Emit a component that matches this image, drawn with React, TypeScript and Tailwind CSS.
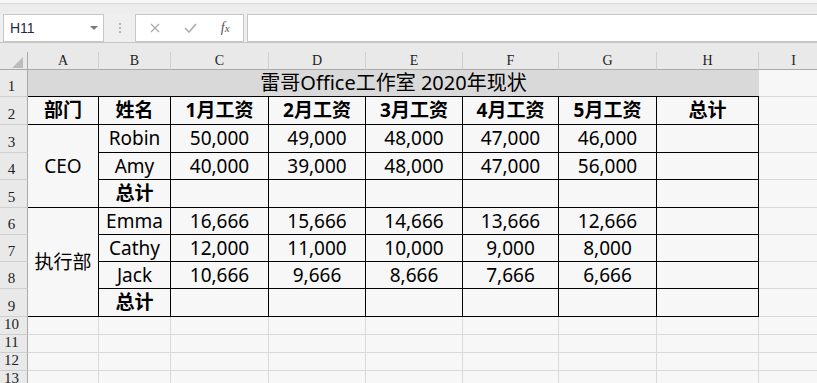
import React from 'react';

const T = 'border-r border-b border-black flex items-center justify-center';
const G = 'border-r border-b border-[#d9d9d9]';
const CELL_FONT = { fontFamily: '"Noto Sans", "Noto Sans CJK SC", sans-serif' };

const RowHead: React.FC<{ n: number }> = ({ n }) => (
  <div className="bg-[#e9e9e9] border-r border-b border-r-[#a9a9a9] border-b-[#cfcfcf] flex items-end justify-center pr-[4px] pb-[2px] text-[15px] leading-none text-[#222] font-['Liberation_Serif',serif]">
    {n}
  </div>
);

const DataCell: React.FC<{ children?: React.ReactNode; bold?: boolean }> = ({ children, bold }) => (
  <div className={`${T} text-[19px] text-black ${bold ? 'font-bold' : ''}`} style={CELL_FONT}>
    {children}
  </div>
);

const people = [
  ['Robin', '50,000', '49,000', '48,000', '47,000', '46,000'],
  ['Amy', '40,000', '39,000', '48,000', '47,000', '56,000'],
  ['Emma', '16,666', '15,666', '14,666', '13,666', '12,666'],
  ['Cathy', '12,000', '11,000', '10,000', '9,000', '8,000'],
  ['Jack', '10,666', '9,666', '8,666', '7,666', '6,666'],
];

const PersonRow: React.FC<{ n: number; row: string[] }> = ({ n, row }) => (
  <>
    <RowHead n={n} />
    {row.map((v, i) => (
      <DataCell key={i}>{v}</DataCell>
    ))}
    <DataCell />
    <div className={G} />
  </>
);

const TotalRow: React.FC<{ n: number }> = ({ n }) => (
  <>
    <RowHead n={n} />
    <DataCell bold>总计</DataCell>
    <DataCell />
    <DataCell />
    <DataCell />
    <DataCell />
    <DataCell />
    <DataCell />
    <div className={G} />
  </>
);

const EmptyRow: React.FC<{ n: number }> = ({ n }) => (
  <>
    <RowHead n={n} />
    {Array.from({ length: 9 }).map((_, i) => (
      <div key={i} className={G} />
    ))}
  </>
);

export default function App() {
  const letters = ['A', 'B', 'C', 'D', 'E', 'F', 'G', 'H', 'I'];
  const heads = ['部门', '姓名', '1月工资', '2月工资', '3月工资', '4月工资', '5月工资', '总计'];

  return (
    <div className="w-[817px] h-[383px] overflow-hidden bg-[#f7f7f7]">
      {/* top strip */}
      <div className="h-[14px] bg-[#ededed] border-t-[3px] border-[#f7f7f7]">
        <div className="h-px bg-[#d8d8d8]" />
      </div>

      {/* formula bar */}
      <div className="h-[28px] bg-[#efefef] flex items-stretch">
        <div className="ml-[3px] w-[101px] bg-white border border-[#c6c6c6] flex items-center justify-between pl-[6px] pr-[5px]">
          <span className="text-[14px] text-[#1f2a44] font-['Liberation_Sans',sans-serif]">H11</span>
          <svg width="8" height="5" viewBox="0 0 8 5">
            <polygon points="0,0 8,0 4,4" fill="#7a7a7a" />
          </svg>
        </div>
        <div className="w-[31px] flex flex-col items-center justify-center gap-[2px]">
          <div className="w-[2px] h-[2px] bg-[#b5b5b5]" />
          <div className="w-[2px] h-[2px] bg-[#b5b5b5]" />
          <div className="w-[2px] h-[2px] bg-[#b5b5b5]" />
        </div>
        <div className="w-[109px] bg-white border border-[#c6c6c6] flex items-center">
          <div className="w-[36px] flex justify-center pl-[2px]">
            <svg width="10" height="10" viewBox="0 0 10 10">
              <path d="M1 1 L9 9 M9 1 L1 9" stroke="#ababab" strokeWidth="1.3" />
            </svg>
          </div>
          <div className="w-[36px] flex justify-center pl-[2px]">
            <svg width="13" height="10" viewBox="0 0 13 10">
              <path d="M1 5 L5 9 L12 1" stroke="#ababab" strokeWidth="1.6" fill="none" />
            </svg>
          </div>
          <div className="w-[36px] flex justify-center">
            <span className="italic text-[14px] text-[#555] font-['Liberation_Serif',serif] leading-none">
              f<span className="text-[11px]">x</span>
            </span>
          </div>
        </div>
        <div className="ml-[3px] flex-1 bg-white border border-[#c6c6c6] border-r-0" />
      </div>

      {/* band above headers */}
      <div className="h-[10px] bg-[#e9e9e9] border-t border-[#c6c6c6]" />

      {/* sheet */}
      <div className="grid grid-cols-[28px_71px_72px_98px_97px_97px_96px_98px_102px_70px] grid-rows-[18px_27px_28px_28px_27px_28px_27px_27px_27px_28px_18px_18px_18px_18px]">
        {/* column header row */}
        <div className="bg-[#e9e9e9] border-r border-b border-[#a9a9a9] relative">
          <svg className="absolute left-[12px] top-[5px]" width="11" height="11" viewBox="0 0 11 11">
            <polygon points="11,0 11,11 0,11" fill="#bcbcbc" />
          </svg>
        </div>
        {letters.map((l) => (
          <div
            key={l}
            className="bg-[#e9e9e9] border-r border-b border-r-[#cfcfcf] border-b-[#a9a9a9] flex items-center justify-center text-[14px] leading-none text-[#222] font-['Liberation_Serif',serif]"
          >
            {l}
          </div>
        ))}

        {/* row 1 title */}
        <RowHead n={1} />
        <div
          className="col-span-8 bg-[#d9d9d9] border-b border-black flex items-center justify-center text-[20px] text-black"
          style={CELL_FONT}
        >
          雷哥Office工作室 2020年现状
        </div>
        <div className={G} />

        {/* row 2 headers */}
        <RowHead n={2} />
        {heads.map((h) => (
          <DataCell key={h} bold>
            {h}
          </DataCell>
        ))}
        <div className={G} />

        {/* rows 3-5 */}
        <RowHead n={3} />
        <div className={`${T} row-span-3 text-[19px] text-black`} style={CELL_FONT}>
          CEO
        </div>
        {people[0].map((v, i) => (
          <DataCell key={i}>{v}</DataCell>
        ))}
        <DataCell />
        <div className={G} />
        <PersonRow n={4} row={people[1]} />
        <TotalRow n={5} />

        {/* rows 6-9 */}
        <RowHead n={6} />
        <div className={`${T} row-span-4 text-[19px] text-black`} style={CELL_FONT}>
          执行部
        </div>
        {people[2].map((v, i) => (
          <DataCell key={i}>{v}</DataCell>
        ))}
        <DataCell />
        <div className={G} />
        <PersonRow n={7} row={people[3]} />
        <PersonRow n={8} row={people[4]} />
        <TotalRow n={9} />

        <EmptyRow n={10} />
        <EmptyRow n={11} />
        <EmptyRow n={12} />
        <EmptyRow n={13} />
      </div>
    </div>
  );
}
